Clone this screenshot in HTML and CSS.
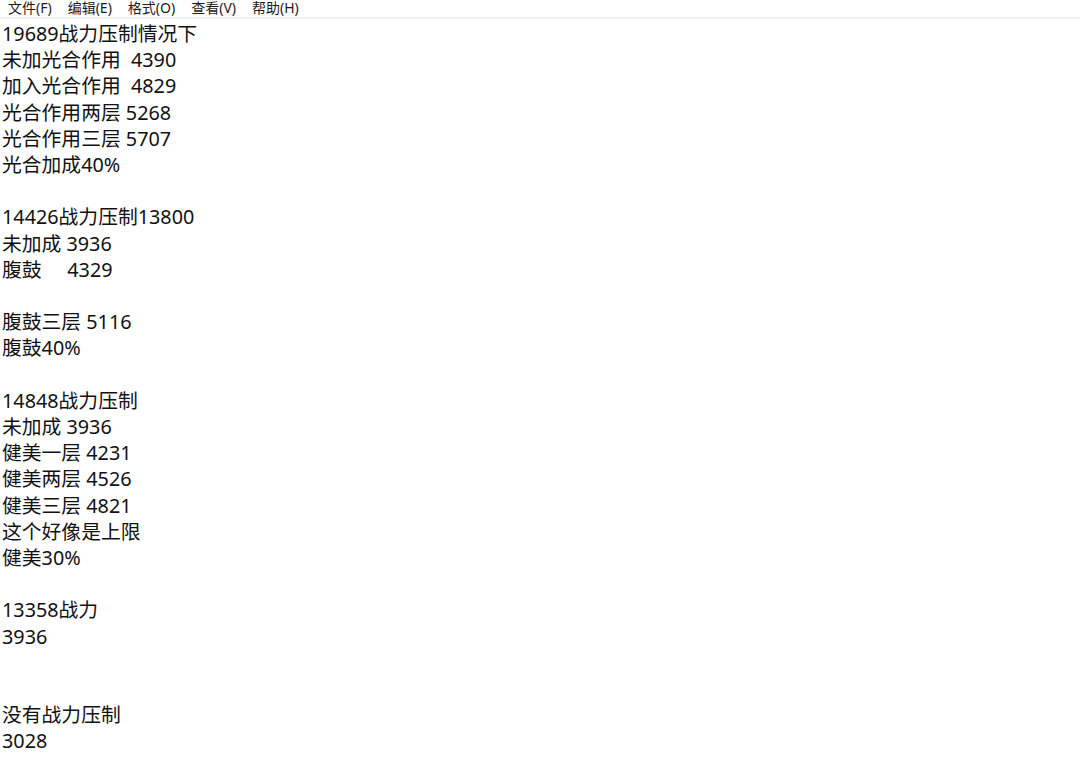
FILE: index.html
```html
<!DOCTYPE html>
<html lang="zh-CN">
<head>
<meta charset="utf-8">
<title>记事本</title>
<link rel="stylesheet" href="styles.css">
</head>
<body>
<div class="menubar">
  <span class="menu-item">文件(F)</span>
  <span class="menu-item">编辑(E)</span>
  <span class="menu-item">格式(O)</span>
  <span class="menu-item">查看(V)</span>
  <span class="menu-item">帮助(H)</span>
</div>
<pre class="editor">19689战力压制情况下
未加光合作用  4390
加入光合作用  4829
光合作用两层 5268
光合作用三层 5707
光合加成40%

14426战力压制13800
未加成 3936
腹鼓     4329

腹鼓三层 5116
腹鼓40%

14848战力压制
未加成 3936
健美一层 4231
健美两层 4526
健美三层 4821
这个好像是上限
健美30%

13358战力
3936


没有战力压制
3028</pre>
</body>
</html>
```
FILE: styles.css
```css
html, body {
  margin: 0;
  padding: 0;
  background: #ffffff;
}

.menubar {
  display: flex;
  gap: 16px;
  height: 17px;
  padding-left: 8px;
  border-bottom: 2px solid #f0f0f0;
  font-family: "Noto Sans", "Noto Sans CJK SC", sans-serif;
  font-size: 14px;
  line-height: 16px;
  color: #1b1b1b;
}

.menu-item {
  white-space: nowrap;
}

.editor {
  margin: 0;
  padding: 2px 0 0 2px;
  font-family: "Noto Sans", "Noto Sans CJK SC", sans-serif;
  font-size: 19.8px;
  line-height: 26.2px;
  color: #111111;
  white-space: pre;
}
```
